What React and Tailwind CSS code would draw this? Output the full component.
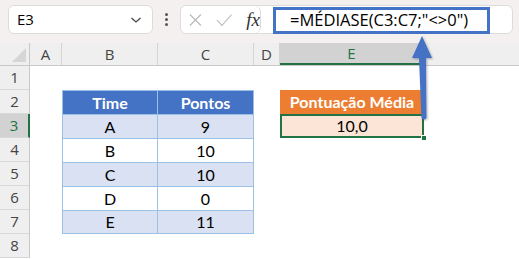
import React from 'react';

const cols = [
  { key: 'A', w: 'w-[32px]' },
  { key: 'B', w: 'w-[96px]' },
  { key: 'C', w: 'w-[96px]' },
  { key: 'D', w: 'w-[26px]' },
  { key: 'E', w: 'w-[144px]' },
];

const data = [
  ['A', '9'],
  ['B', '10'],
  ['C', '10'],
  ['D', '0'],
  ['E', '11'],
];

const Cell = ({ w, className = '', children }) => (
  <div className={`${w} h-full shrink-0 flex items-center justify-center ${className}`}>{children}</div>
);

const Row = ({ n, children }) => (
  <div className="flex h-[24px]">
    <div
      className={`w-[30px] shrink-0 flex items-center justify-center text-[15px] border-b border-[#d8d8d8] ${
        n === 3 ? 'bg-[#d2d2d2] text-[#217346] border-r-2 border-r-[#217346]' : 'bg-[#efefef] text-[#444] border-r border-r-[#c8c8c8]'
      }`}
      style={{ fontFamily: '"Open Sans", sans-serif' }}
    >
      {n}
    </div>
    {children}
  </div>
);

export default function App() {
  return (
    <div className="relative w-[519px] h-[259px] overflow-hidden bg-white" style={{ fontFamily: '"Lato", sans-serif' }}>
      {/* Formula bar */}
      <div className="h-[43px] bg-[#f4f0f0] flex items-start pt-[5px] pl-[8px] pr-[6px]">
        <div className="w-[145px] h-[29px] bg-white rounded-md border border-[#dcdcdc] flex items-center px-[8px]">
          <span className="text-[15px] text-black" style={{ fontFamily: '"Open Sans", sans-serif' }}>E3</span>
          <svg className="ml-auto mr-[2px]" width="12" height="8" viewBox="0 0 12 8" fill="none" stroke="#444" strokeWidth="1.3">
            <path d="M1.5 2l4.5 4 4.5-4" />
          </svg>
        </div>
        <div className="w-[27px] h-[29px] flex flex-col items-center justify-center gap-[2px]">
          <span className="w-[3px] h-[3px] bg-[#555] rounded-full" />
          <span className="w-[3px] h-[3px] bg-[#555] rounded-full" />
          <span className="w-[3px] h-[3px] bg-[#555] rounded-full" />
        </div>
        <div className="flex-1 h-[29px] bg-white rounded-md border border-[#dcdcdc] flex items-center">
          <div className="w-[80px] h-full flex items-center pl-[8px] gap-[14px] border-r border-[#dcdcdc] rounded-md">
            <svg width="14" height="14" viewBox="0 0 14 14" stroke="#b8b8b8" strokeWidth="1.2" fill="none">
              <path d="M1 1l12 12M13 1L1 13" />
            </svg>
            <svg width="18" height="14" viewBox="0 0 18 14" stroke="#b8b8b8" strokeWidth="1.2" fill="none">
              <path d="M1 7l5.5 6L17 1" />
            </svg>
            <span className="text-[19px] italic text-[#333] leading-none" style={{ fontFamily: '"Liberation Serif", serif' }}>
              fx
            </span>
          </div>
          <div className="ml-[12px] mt-[2px] w-[217px] h-[27px] border-[3px] border-[#4472c4] flex items-center pl-[14px]">
            <span className="text-[16.5px] text-black" style={{ fontFamily: '"Open Sans", sans-serif' }}>
              =MÉDIASE(C3:C7;"&lt;&gt;0")
            </span>
          </div>
        </div>
      </div>

      {/* Column headers */}
      <div className="flex h-[23px] bg-[#efefef] border-b border-[#c8c8c8]" style={{ fontFamily: '"Open Sans", sans-serif' }}>
        <div className="w-[30px] shrink-0 border-r border-[#c8c8c8] relative">
          <svg className="absolute right-[3px] bottom-[3px]" width="14" height="14" viewBox="0 0 14 14">
            <path d="M14 0V14H0Z" fill="#d6d6d6" />
          </svg>
        </div>
        {cols.map((c) => (
          <div
            key={c.key}
            className={`${c.w} shrink-0 flex items-center justify-center text-[15px] border-r border-[#d4d4d4] ${
              c.key === 'E' ? 'bg-[#d2d2d2] text-[#217346] border-b-2 border-b-[#217346]' : 'text-[#444]'
            }`}
          >
            {c.key}
          </div>
        ))}
        <div className="flex-1" />
      </div>

      {/* Rows */}
      <Row n={1} />
      <Row n={2}>
        <Cell w="w-[32px]" />
        <div className="flex h-full border-t border-l border-[#9bc2e6]">
          <Cell w="w-[95px]" className="bg-[#4472c4] text-white font-bold text-[16px] border-r border-[#9bc2e6]">Time</Cell>
          <Cell w="w-[96px]" className="bg-[#4472c4] text-white font-bold text-[16px] border-r border-[#9bc2e6]">Pontos</Cell>
        </div>
        <Cell w="w-[26px]" />
        <Cell w="w-[144px]" className="bg-[#ed7d31] text-white font-bold text-[16px]">Pontuação Média</Cell>
      </Row>
      {data.map(([t, p], i) => (
        <Row key={t} n={i + 3}>
          <Cell w="w-[32px]" />
          <div className={`flex h-full border-t border-l border-[#9bc2e6] ${i === 4 ? 'border-b' : ''}`}>
            <Cell w="w-[95px]" className={`${i % 2 === 0 ? 'bg-[#d9e1f2]' : 'bg-white'} text-[16px] text-black border-r border-[#9bc2e6]`}>
              {t}
            </Cell>
            <Cell w="w-[96px]" className={`${i % 2 === 0 ? 'bg-[#d9e1f2]' : 'bg-white'} text-[16px] text-black border-r border-[#9bc2e6]`}>
              {p}
            </Cell>
          </div>
          <Cell w="w-[26px]" />
          {i === 0 && (
            <div className="relative w-[144px] h-full shrink-0 bg-[#fce4d6] border-2 border-[#217346] flex items-center justify-center text-[16px] text-black">
              10,0
              <span className="absolute right-[-5px] bottom-[-5px] w-[6px] h-[6px] bg-[#217346] border border-white" />
            </div>
          )}
        </Row>
      ))}
      <Row n={8} />

      {/* Arrow */}
      <svg className="absolute left-[410px] top-[34px]" width="30" height="90" viewBox="0 0 30 90">
        <defs>
          <filter id="sh" x="-50%" y="-20%" width="200%" height="140%">
            <feDropShadow dx="1" dy="1" stdDeviation="1" floodColor="#000" floodOpacity="0.3" />
          </filter>
        </defs>
        <g filter="url(#sh)">
          <path d="M12 2L2 24H9L11.5 84Q14 87 16.5 84L16 24H22Z" fill="#4472c4" />
        </g>
      </svg>
    </div>
  );
}
